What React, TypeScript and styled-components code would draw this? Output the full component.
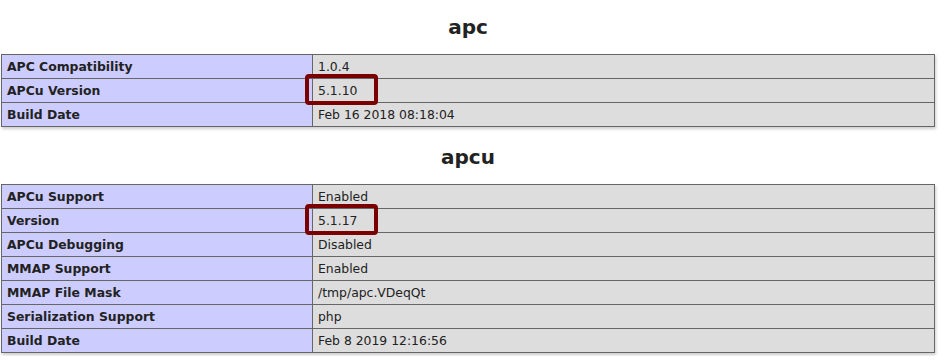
import React from 'react';
import styled, { createGlobalStyle } from 'styled-components';

const GlobalStyle = createGlobalStyle`
  body {
    margin: 0;
    background: #fff;
    color: #222;
    font-family: "DejaVu Sans", sans-serif;
  }
`;

const Page = styled.div`
  padding: 0 12px 0 1px;
`;

const Title = styled.h2`
  margin: 0;
  padding: 15px 0 15px 0;
  font-size: 20px;
  line-height: 24px;
  font-weight: bold;
  text-align: center;
  width: 934px;
`;

const InfoTable = styled.table`
  border-collapse: collapse;
  width: 934px;
  box-shadow: 1px 2px 3px #ccc;
  margin-bottom: 3px;
`;

const Cell = styled.td<{ $label?: boolean }>`
  border: 1px solid #666;
  font-size: 12.4px;
  line-height: 15px;
  padding: 4px 5px;
  vertical-align: baseline;
  position: relative;
  background: ${p => (p.$label ? '#ccf' : '#ddd')};
  font-weight: ${p => (p.$label ? 'bold' : 'normal')};
  width: ${p => (p.$label ? '300px' : 'auto')};
  color: #222;
`;

const Highlight = styled.span`
  position: absolute;
  left: -8px;
  top: -5px;
  width: 73px;
  height: 31px;
  box-sizing: border-box;
  border: 4px solid #7a0000;
  border-radius: 4px;
  pointer-events: none;
  z-index: 1;
`;

type Row = { name: string; value: string; mark?: boolean };

const apc: Row[] = [
  { name: 'APC Compatibility', value: '1.0.4' },
  { name: 'APCu Version', value: '5.1.10', mark: true },
  { name: 'Build Date', value: 'Feb 16 2018 08:18:04' },
];

const apcu: Row[] = [
  { name: 'APCu Support', value: 'Enabled' },
  { name: 'Version', value: '5.1.17', mark: true },
  { name: 'APCu Debugging', value: 'Disabled' },
  { name: 'MMAP Support', value: 'Enabled' },
  { name: 'MMAP File Mask', value: '/tmp/apc.VDeqQt' },
  { name: 'Serialization Support', value: 'php' },
  { name: 'Build Date', value: 'Feb 8 2019 12:16:56' },
];

const Section = ({ title, rows }: { title: string; rows: Row[] }) => (
  <>
    <Title>{title}</Title>
    <InfoTable>
      <tbody>
        {rows.map(r => (
          <tr key={r.name}>
            <Cell $label>{r.name}</Cell>
            <Cell>
              {r.value}
              {r.mark && <Highlight />}
            </Cell>
          </tr>
        ))}
      </tbody>
    </InfoTable>
  </>
);

export default function App() {
  return (
    <Page>
      <GlobalStyle />
      <Section title="apc" rows={apc} />
      <Section title="apcu" rows={apcu} />
    </Page>
  );
}
